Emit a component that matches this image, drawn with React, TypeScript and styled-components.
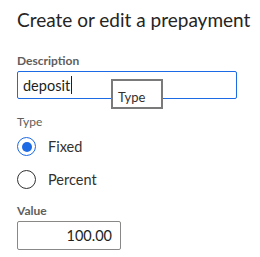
import styled, { createGlobalStyle } from "styled-components";

const GlobalStyle = createGlobalStyle`
    body {
        margin: 0;
        background: #ffffff;
        font-family: Lato, "Open Sans", "Liberation Sans", sans-serif;
        color: #323130;
    }
`;

const Panel = styled.div`
    width: 260px;
    height: 257px;
    padding: 8px 17px 0;
    box-sizing: border-box;
    overflow: hidden;
`;

const Title = styled.h1`
    margin: 0;
    font-size: 19px;
    line-height: 24px;
    font-weight: 400;
    white-space: nowrap;
    color: #252423;
`;

const Field = styled.div`
    display: flex;
    flex-direction: column;
    margin-top: ${props => props.$top || 0}px;
`;

const Label = styled.label`
    font-size: 12px;
    line-height: 16px;
    font-weight: ${props => (props.$light ? 400 : 700)};
    color: #605e5c;
`;

const InputWrap = styled.div`
    position: relative;
    margin-top: 2px;
`;

const TextBox = styled.div`
    box-sizing: border-box;
    width: ${props => props.$width}px;
    height: ${props => props.$height || 28}px;
    border: 1px solid ${props => (props.$focused ? "#1d6ae5" : "#8a8886")};
    border-radius: 2px;
    display: flex;
    align-items: center;
    justify-content: ${props => (props.$right ? "flex-end" : "flex-start")};
    padding: 0 ${props => (props.$right ? 8 : 5)}px;
    font-size: 14.5px;
    color: #201f1e;
`;

const Caret = styled.span`
    display: inline-block;
    width: 1px;
    height: 18px;
    background: #201f1e;
    margin-left: 1px;
`;

const Tooltip = styled.div`
    position: absolute;
    left: 94px;
    top: 8px;
    width: 52px;
    height: 30px;
    box-sizing: border-box;
    border: 2px solid #7a7a7a;
    background: #ffffff;
    font-size: 13px;
    padding: 8px 0 0 5px;
    color: #323130;
`;

const RadioGroup = styled.div`
    display: flex;
    flex-direction: column;
    gap: 14px;
    margin-top: 7px;
`;

const Option = styled.div`
    display: flex;
    align-items: center;
    gap: 12px;
    font-size: 14.5px;
    color: #323130;
`;

const Circle = styled.span`
    box-sizing: border-box;
    width: 19px;
    height: 19px;
    border-radius: 50%;
    border: 1px solid ${props => (props.$checked ? "#1d6ae5" : "#323130")};
    display: flex;
    align-items: center;
    justify-content: center;
    &::after {
        content: "";
        width: 10px;
        height: 10px;
        border-radius: 50%;
        background: ${props => (props.$checked ? "#1d6ae5" : "transparent")};
    }
`;

function App() {
    return (<>
        <GlobalStyle />
        <Panel>
            <Title>Create or edit a prepayment</Title>
            <Field $top={21}>
                <Label>Description</Label>
                <InputWrap>
                    <TextBox $width={220} $focused>
                        deposit<Caret />
                    </TextBox>
                    <Tooltip>Type</Tooltip>
                </InputWrap>
            </Field>
            <Field $top={15}>
                <Label $light>Type</Label>
                <RadioGroup>
                    <Option><Circle $checked />Fixed</Option>
                    <Option><Circle />Percent</Option>
                </RadioGroup>
            </Field>
            <Field $top={14}>
                <Label>Value</Label>
                <InputWrap>
                    <TextBox $width={104} $height={29} $right>100.00</TextBox>
                </InputWrap>
            </Field>
        </Panel>
    </>);
}

export default App;
